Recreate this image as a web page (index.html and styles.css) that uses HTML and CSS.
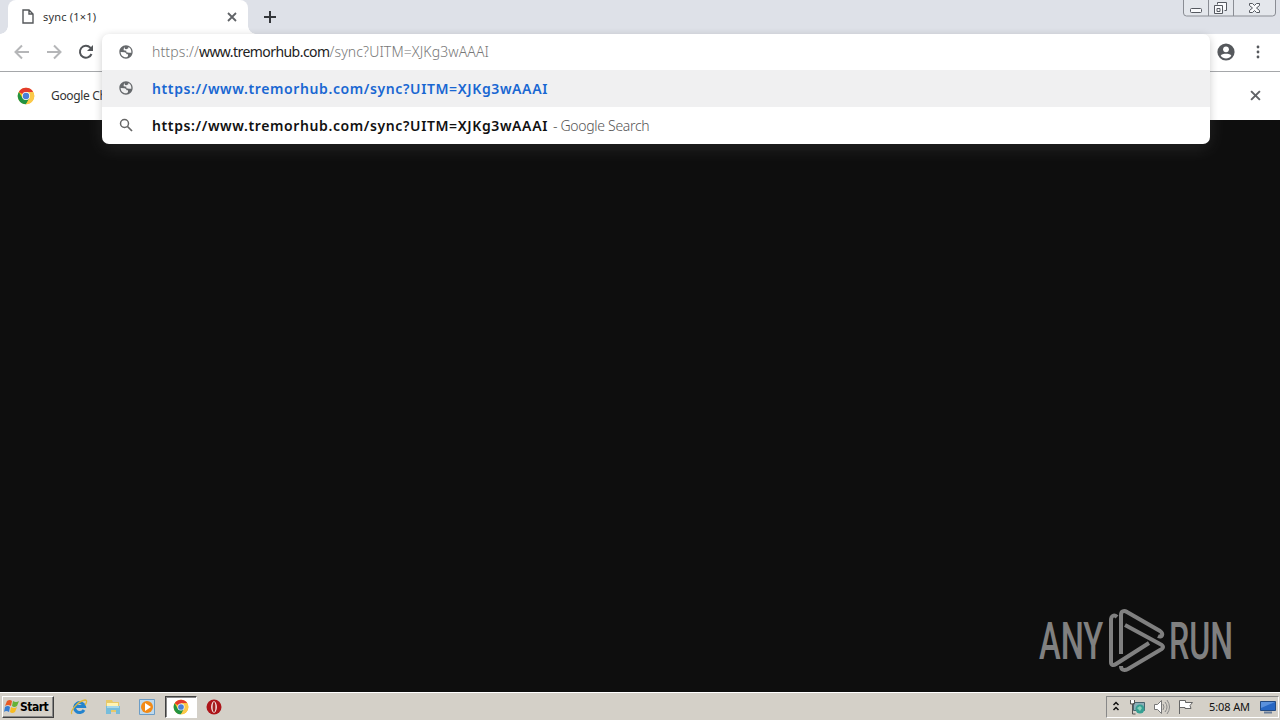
FILE: index.html
```html
<!DOCTYPE html>
<html lang="en">
<head>
<meta charset="utf-8">
<title>sync (1×1)</title>
<link rel="stylesheet" href="styles.css">
</head>
<body>
<svg class="defs" width="0" height="0" aria-hidden="true">
  <symbol id="globe" viewBox="0 0 24 24"><path fill-rule="evenodd" d="M12 2C6.480 2 2 6.480 2 12s4.480 10 10 10 10-4.480 10-10S17.520 2 12 2zM4 12l6 .3q2.500 1 3 3h2v3l-2 1.500C7.500 20.500 4 16.500 4 12zM9.500 4.500l-1 3v2l4 .5v2.500l4 .8 3.500-.3C20.500 9 18.500 5.500 15.500 4.500v2l-3 1.500-2-.5z"/></symbol>
  <symbol id="chrome" viewBox="0 0 24 24">
    <circle cx="12" cy="12" r="11" fill="#fbc116"/>
    <path d="M12 12 2.470 6.500A11 11 0 0 1 21.530 6.500H12z" fill="#e33b2e"/>
    <path d="M2.470 6.500A11 11 0 0 0 12 23l4.760-8.250L12 12l-4.760 2.750z" fill="#229342"/>
    <path d="M12 6.500h9.530A11 11 0 0 1 12 23l4.760-8.250z" fill="#fbc94a"/>
    <circle cx="12" cy="12" r="5.300" fill="#fff"/><circle cx="12" cy="12" r="4.300" fill="#4a80d8"/>
  </symbol>
</svg>
<div class="screen">
  <header class="tabs">
    <div class="tab">
      <svg class="page" width="12" height="15" viewBox="0 0 12 15"><path d="M1 1h6l4 4v9H1zM7 1v4h4"/></svg>
      <span class="tab-title">sync (1×1)</span>
      <svg class="close" width="10" height="10" viewBox="0 0 10 10"><path d="m1 1 8 8M9 1 1 9"/></svg>
    </div>
    <svg class="plus" width="12" height="12" viewBox="0 0 12 12"><path d="M6 0v12M0 6h12"/></svg>
    <svg class="caption" width="94" height="18" viewBox="0 0 94 18">
      <path class="frame" d="M.5 0v13q0 3 3 3h86q3 0 3-3V0M25.500 0v16M50.500 0v16"/>
      <rect class="glyph" x="7.500" y="8.500" width="11" height="4" rx="1"/>
      <path class="glyph" d="M34.500 4.500v-2h9v8h-2M31.500 5.500h8v8h-8zM34 8.500h3v3h-3z"/>
      <path class="glyph" d="M66.500 3.500h3l2 2 2-2h3v2l-3 2.500 3 2.500v2h-3l-2-2-2 2h-3v-2l3-2.500-3-2.500z"/>
    </svg>
  </header>
  <div class="toolbar">
    <svg class="nav faint" width="16" height="16" viewBox="0 0 16 16"><path d="M15 8H2M8 1.500 1.500 8 8 14.500"/></svg>
    <svg class="nav faint" width="16" height="16" viewBox="0 0 16 16"><path d="M1 8h13M8 1.500 14.500 8 8 14.500"/></svg>
    <svg class="nav" width="16" height="16" viewBox="0 0 16 16"><path d="M13.500 10A6 6 0 1 1 12.300 3.600L14 5.300"/><path class="solid" d="M15 1v6H9z"/></svg>
    <svg class="user" width="18" height="18" viewBox="0 0 18 18"><circle cx="9" cy="9" r="8.600" fill="#55585c"/><circle cx="9" cy="6.300" r="2.900" fill="#fff"/><path d="M3.700 12.800C4.700 10.200 13.300 10.200 14.300 12.800 11.700 16.300 6.300 16.300 3.700 12.800z" fill="#fff"/></svg>
    <svg class="more" width="4" height="14" viewBox="0 0 4 14"><circle cx="2" cy="2" r="1.400"/><circle cx="2" cy="7" r="1.400"/><circle cx="2" cy="12" r="1.400"/></svg>
  </div>
  <div class="infobar">
    <svg width="18" height="18"><use href="#chrome"/></svg>
    <span class="info-text">Google Ch</span>
    <svg class="close info-close" width="11" height="11" viewBox="0 0 10 10"><path d="m1 1 8 8M9 1 1 9"/></svg>
  </div>
  <main class="view">
    <svg class="brand" width="200" height="68" viewBox="0 0 200 68">
      <text transform="translate(3 52) scale(.64 1)">ANY</text>
      <text transform="translate(133 52) scale(.63 1)">RUN</text>
      <path d="M81 10c-3-3-6-1-6 3v42c0 3 2 4 5 2l33-21M85 47V8c0-4 3-5 6-3l33 19c4 3 2 7-2 5M89 18l35 19c4 2 4 4 0 6L92 62c-4 2-7 1-7-3"/>
    </svg>
  </main>
  <footer class="taskbar">
    <div class="start">
      <svg width="16" height="15" viewBox="0 0 16 15"><path fill="#e95a24" d="M3 2q3-2 5 0L7 7Q4 5 1 7z"/><path fill="#66b236" d="M9 2q3 2 6 0l-2 5q-3 2-5 0z"/><path fill="#377dd2" d="M1 8q3-2 5 0l-1 5q-3-2-5 0z"/><path fill="#f8bc22" d="M7 8q3 2 6 0l-2 5q-3 2-5 0z"/></svg>
      <span class="start-text">Start</span>
    </div>
    <div class="quick">
      <svg width="18" height="18" viewBox="0 0 18 18"><path d="M14 12a5 5 0 1 1 .5-3.500H5" fill="none" stroke="#2383ce" stroke-width="3"/><path d="M2 16C-1 14 8 3 15 2c3 0 1 4 0 5" fill="none" stroke="#e0b83c" stroke-width="1.300"/></svg>
      <svg width="18" height="18" viewBox="0 0 18 18"><path d="M2 4V2h6l1 2h6v10H2z" fill="#e8c968"/><path d="M3 5h11v5H3z" fill="#fff3b3"/><path d="M2 8h14v8h-4v-4H7v4H2z" fill="#77bddb"/><path d="M3 9h12" stroke="#d5f1fa"/></svg>
      <svg width="18" height="18" viewBox="0 0 18 18"><path d="M1.500 1.500h15v15h-15z" fill="#bed9ed" stroke="#6c9dc6"/><circle cx="9" cy="9" r="6" fill="#f28a16"/><path d="m7 5 6 4-6 4z" fill="#fff"/></svg>
    </div>
    <div class="active"><svg width="16" height="16"><use href="#chrome"/></svg></div>
    <svg class="opera" width="16" height="16" viewBox="0 0 16 16"><circle cx="8" cy="8" r="7.500" fill="#ad151a"/><ellipse cx="8" cy="8" rx="2.800" ry="5.800" fill="#fff"/><ellipse cx="8" cy="8" rx="1.500" ry="5" fill="#a3201f"/></svg>
    <div class="tray">
      <svg width="8" height="12" viewBox="0 0 8 12"><path d="m1.500 4 2.500-2.500L6.500 4M1.500 9 4 6.500 6.500 9" fill="none" stroke="#111" stroke-width="1.500"/></svg>
      <svg class="network" width="17" height="16" viewBox="0 0 17 16"><path d="M4.500 3.500h11v8h-11z" fill="#8bafb8" stroke="#496570"/><path d="M1.500 1v4h4V1M3.500 5v10h3" fill="none" stroke="#555"/><path d="M2 1h3v3H2z" fill="#fff"/><circle cx="11" cy="10" r="4.500" fill="#36a093"/><path d="m8 9 3-2 2 2-2 3z" fill="#8ad1ba"/></svg>
      <svg class="sound" width="17" height="16" viewBox="0 0 17 16"><path d="M1.500 5.500h3l4-4v13l-4-4h-3z" fill="#fff" stroke="#777"/><path d="M10 5q2 3 0 6M12 3q4 5 0 10M14 1q5 7 0 14" fill="none" stroke="#888"/></svg>
      <svg class="flag" width="17" height="16" viewBox="0 0 17 16"><path d="M2.500 15V1.500h6v2h7l-2.500 3 1 3H8v-1H3" fill="#fff" stroke="#666"/></svg>
      <span class="clock">5:08 AM</span>
      <svg class="desktop" width="16" height="14" viewBox="0 0 16 14"><path d="M.5 1.500h15v9H.5z" fill="#2867c3" stroke="#244b82"/><path d="M1 2h14L1 8z" fill="#5b91dc"/><path d="M4 12.500h8" stroke="#697d98" stroke-width="2"/></svg>
    </div>
  </footer>
  <section class="omnibox">
    <div class="row address"><svg width="16" height="16"><use href="#globe"/></svg><span class="url">https://<b>www.tremorhub.com</b>/sync?UITM=XJKg3wAAAI</span></div>
    <div class="row selected"><svg width="16" height="16"><use href="#globe"/></svg><span class="match">https://www.tremorhub.com/sync?UITM=XJKg3wAAAI</span></div>
    <div class="row"><svg width="16" height="16" viewBox="0 0 16 16"><circle cx="6.500" cy="6.500" r="4" fill="none" stroke="#666" stroke-width="1.500"/><path d="m9.500 9.500 4.500 4.500" stroke="#666" stroke-width="1.700"/></svg><span class="match">https://www.tremorhub.com/sync?UITM=XJKg3wAAAI</span><span class="provider">- Google Search</span></div>
  </section>
</div>
</body>
</html>
```
FILE: styles.css
```css
* { box-sizing: border-box; }
body { margin: 0; font-family: "Noto Sans", sans-serif; color: #333; }
svg { display: block; flex: none; }
.defs { position: absolute; }
.screen { position: relative; width: 1280px; height: 720px; display: flex; flex-direction: column; overflow: hidden; background: #0e0e0e; }
span { white-space: nowrap; }
.tabs { height: 34px; flex: none; display: flex; background: #dee1e8; }
.tab { position: relative; width: 240px; margin-left: 8px; padding: 0 11px 1px 14px; display: flex; align-items: center; background: #fff; border-radius: 8px 8px 0 0; }
.tab::before, .tab::after { content: ""; position: absolute; bottom: 0; width: 8px; height: 8px; }
.tab::before { left: -8px; background: radial-gradient(circle at 0 0, transparent 7.5px, #fff 8px); }
.tab::after { right: -8px; background: radial-gradient(circle at 100% 0, transparent 7.5px, #fff 8px); }
.page { fill: #fff; stroke: #55585b; stroke-width: 1.4; }
.tab-title { margin-left: 9px; font-size: 11px; letter-spacing: .2px; }
.close { margin-left: auto; fill: none; stroke: #606367; stroke-width: 1.8; }
.plus { margin: 11px 0 0 16px; stroke: #34363a; stroke-width: 2; }
.caption { margin-left: auto; margin-right: 3px; }
.frame { fill: #e4e7ec; stroke: #8a8d94; }
.glyph { fill: #f9fafc; stroke: #555960; }
.toolbar { height: 38px; flex: none; display: flex; align-items: center; gap: 16px; padding: 0 20px 2px 14px; background: #fff; border-bottom: 1px solid #a5a7aa; }
.nav { fill: none; stroke: #515458; stroke-width: 2; }
.faint { stroke: #b5b6b8; }
.nav .solid { fill: #515458; stroke: none; }
.user { margin-left: auto; }
.more { margin-left: 5px; fill: #55585c; }
.infobar { height: 48px; flex: none; display: flex; align-items: center; padding: 0 19px 1px 17px; background: #fff; }
.info-text { margin-left: 16px; font-size: 12px; letter-spacing: -.35px; }
.view { flex: 1; display: flex; justify-content: flex-end; align-items: flex-end; padding: 0 44px 17px 0; }
.brand { overflow: visible; }
.brand text { font: 500 51px "Roboto", sans-serif; fill: #808080; }
.brand path { fill: none; stroke: #808080; stroke-width: 4; }
.taskbar { height: 28px; flex: none; display: flex; align-items: center; padding: 2px 1px 1px 2px; background: #d4d0c8; box-shadow: inset 0 1px #fff; }
.start { width: 52px; height: 22px; display: flex; align-items: center; padding-left: 1px; border: 1px solid; border-color: #fff #404040 #404040 #fff; box-shadow: inset -1px -1px #888; }
.start-text { color: #000; font: bold 12px "DejaVu Sans Condensed", sans-serif; letter-spacing: -.5px; }
.quick { display: flex; gap: 16px; margin-left: 16px; }
.active { width: 32px; height: 22px; margin-left: 9px; padding: 2px 0 0 7px; background: #fff; border: 1px solid; border-color: #404040 #fff #fff #404040; box-shadow: inset 1px 1px #888; }
.opera { margin-left: 9px; }
.tray { width: 173px; height: 22px; margin-left: auto; display: flex; align-items: center; padding-left: 5px; border: 1px solid; border-color: #888 #fff #fff #888; color: #111; font-size: 11px; }
.network { margin-left: 9px; }
.sound { margin-left: 7px; }
.flag { margin-left: 7px; }
.clock { margin-left: 15px; letter-spacing: -.1px; }
.desktop { margin-left: auto; margin-right: 2px; }
.omnibox { position: absolute; left: 102px; top: 34px; width: 1108px; height: 110px; background: #fff; border-radius: 7px; overflow: hidden; box-shadow: 0 2px 8px #0003, 0 4px 18px #ffffff1c; }
.row { height: 37px; display: flex; align-items: center; padding: 0 0 1px 16px; fill: #66696c; font-size: 14px; }
.address { height: 36px; }
.selected { background: #f0f0f1; }
.selected .match { color: #1967d2; }
.url { margin-left: 18px; color: #777; font-weight: 300; letter-spacing: .12px; }
.url b { color: #222; font-weight: 400; letter-spacing: -.55px; }
.match { margin-left: 18px; color: #111; font-weight: 600; letter-spacing: .61px; }
.provider { margin-left: 5px; color: #555; font-weight: 300; letter-spacing: -.3px; }
```
